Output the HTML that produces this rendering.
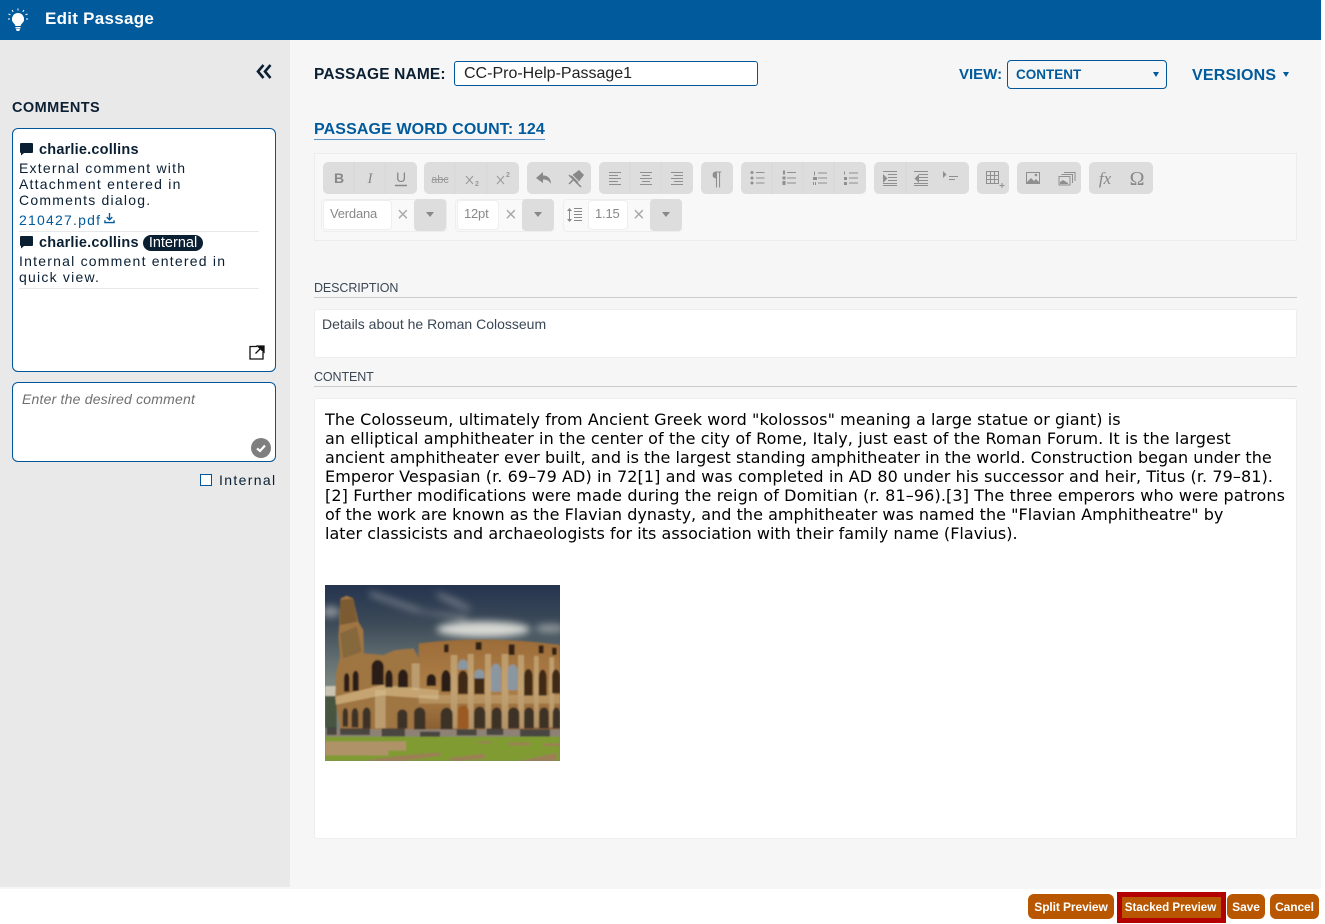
<!DOCTYPE html>
<html><head><meta charset="utf-8"><title>Edit Passage</title>
<style>
html,body{margin:0;padding:0;background:#fff;width:1325px;height:924px;overflow:hidden}
body{position:relative;font-family:"Liberation Sans",sans-serif}
.a{position:absolute}
.t{position:absolute;white-space:nowrap}
.c{font-size:14px;letter-spacing:1.22px;color:#0b1f33;line-height:16px}
.n{font-size:14.5px;font-weight:bold;color:#0b1f33;line-height:16px;letter-spacing:.2px}
.l{font-family:"DejaVu Sans",sans-serif;font-size:16px;color:#000;line-height:19px;left:325px}
.g{position:absolute;top:162px;height:32px;background:#ddd;border-radius:5px}
.g svg{position:absolute;left:0;top:0}
.f{position:absolute;top:199px;height:31px;border:1px solid #eee;border-radius:4px;background:#f9f9f9}
.in{position:absolute;top:200px;height:30px;background:#fff;border:1px solid #eee;border-radius:4px;box-sizing:border-box;color:#888;font-size:13px;line-height:25px;padding-left:6px;letter-spacing:-.2px}
.ar{position:absolute;top:199px;height:32px;width:32px;background:#ddd;border-radius:4px}
.ar:after{content:"";position:absolute;left:12px;top:13px;border-left:4px solid transparent;border-right:4px solid transparent;border-top:5px solid #888}
.x{position:absolute;top:204px;color:#aaa;font-size:20px;line-height:22px}
.b{position:absolute;top:894px;height:25px;background:#b85700;border-radius:6px;color:#fff;font-weight:bold;font-size:12px;line-height:26px;text-align:center;white-space:nowrap;letter-spacing:-.1px}
.h{font-size:12.5px;color:#3a4754;letter-spacing:-.1px}
</style></head><body>
<div class="a" style="left:0;top:0;width:1321px;height:889px;background:#f6f6f6"></div>
<div class="a" style="left:0;top:0;width:1321px;height:40px;background:#005a9c"></div>
<svg class="a" style="left:6px;top:7px" width="24" height="26" viewBox="0 0 24 26"><g stroke="#fff" stroke-width="1" fill="none"><path d="M12 1.500v2M6 3l1.200 1.800M18 3l-1.200 1.800M2.500 7l2 .8M21.500 7l-2 .8M2 12h2M20 12h2"/></g><path d="M12 6a6 6 0 0 0-4 10.500c1 1 1.300 2 1.400 2.500h5.200c.1-.5.400-1.500 1.400-2.500A6 6 0 0 0 12 6z" fill="#fff"/><path d="M9.500 20h5v1.500h-5zM10 22h4l-.7 2h-2.600z" fill="#fff"/></svg>
<div class="t" style="left:45px;top:9px;font-size:17px;font-weight:bold;color:#fff;line-height:20px;letter-spacing:.27px">Edit Passage</div>

<div class="a" style="left:0;top:40px;width:290px;height:847px;background:#e9e9e9"></div>
<svg class="a" style="left:255px;top:63px" width="18" height="17" viewBox="0 0 18 17"><path d="M8.500 2L3 8.500 8.500 15M15.500 2L10 8.500 15.500 15" fill="none" stroke="#0b1f33" stroke-width="2.600"/></svg>
<div class="t" style="left:12px;top:100px;font-size:14.5px;font-weight:bold;color:#0b1f33;line-height:17px;letter-spacing:.45px">COMMENTS</div>

<div class="a" style="left:12px;top:128px;width:262px;height:242px;background:#fff;border:1px solid #00569a;border-radius:6px"></div>
<svg class="a" style="left:20px;top:143px" width="14" height="14" viewBox="0 0 14 14"><path d="M1 0h11a1 1 0 0 1 1 1v8a1 1 0 0 1-1 1H4l-3 2.500V10a1 1 0 0 1-1-1V1a1 1 0 0 1 1-1z" fill="#0b1f33"/></svg>
<div class="t n" style="left:39px;top:142px">charlie.collins</div>
<div class="t c" style="left:19px;top:160px">External comment with</div>
<div class="t c" style="left:19px;top:176px">Attachment entered in</div>
<div class="t c" style="left:19px;top:192px">Comments dialog.</div>
<div class="t c" style="left:19px;top:212px;color:#005a9c">210427.pdf</div>
<svg class="a" style="left:104px;top:212px" width="11" height="12" viewBox="0 0 12 13"><path d="M6 1v7M3 5.500L6 8.500l3-3M1 9v2.500h10V9" fill="none" stroke="#005a9c" stroke-width="1.500"/></svg>
<div class="a" style="left:19px;top:231px;width:240px;height:1px;background:#e8e8e8"></div>
<svg class="a" style="left:20px;top:236px" width="14" height="14" viewBox="0 0 14 14"><path d="M1 0h11a1 1 0 0 1 1 1v8a1 1 0 0 1-1 1H4l-3 2.500V10a1 1 0 0 1-1-1V1a1 1 0 0 1 1-1z" fill="#0b1f33"/></svg>
<div class="t n" style="left:39px;top:235px">charlie.collins</div>
<div class="t" style="left:143px;top:235px;width:60px;height:16px;background:#0b1f33;border-radius:8px;color:#fff;font-size:14.5px;line-height:16px;text-align:center">Internal</div>
<div class="t c" style="left:19px;top:253px">Internal comment entered in</div>
<div class="t c" style="left:19px;top:269px">quick view.</div>
<div class="a" style="left:19px;top:288px;width:240px;height:1px;background:#e8e8e8"></div>
<svg class="a" style="left:249px;top:345px" width="16" height="15" viewBox="0 0 16 15"><path d="M8 1.500H1v12.500h13V7" fill="none" stroke="#111" stroke-width="1.300"/><path d="M6.500 8.500L12 3M8.500 1h6.500v6z" fill="#111" stroke="#111" stroke-width="1.300"/></svg>

<div class="a" style="left:12px;top:382px;width:262px;height:78px;background:#fff;border:1px solid #00569a;border-radius:6px"></div>
<div class="t" style="left:22px;top:391px;font-size:14px;font-style:italic;color:#6f6f6f;line-height:16px;letter-spacing:.2px">Enter the desired comment</div>
<div class="a" style="left:251px;top:438px;width:20px;height:20px;border-radius:50%;background:#7f7f7f"></div>
<svg class="a" style="left:251px;top:438px" width="20" height="20" viewBox="0 0 20 20"><path d="M6 10.500l3 2.500 5-5.500" fill="none" stroke="#fff" stroke-width="2.200"/></svg>
<div class="a" style="left:200px;top:474px;width:10px;height:10px;border:1px solid #00569a;background:#fff"></div>
<div class="t c" style="left:219px;top:472px;letter-spacing:1.35px">Internal</div>

<div class="t" style="left:314px;top:65px;font-size:15.5px;font-weight:bold;color:#0b1f33;line-height:19px;letter-spacing:.15px">PASSAGE NAME:</div>
<div class="a" style="left:454px;top:61px;width:302px;height:23px;background:#fff;border:1px solid #00569a;border-radius:3px"></div>
<div class="t" style="left:464px;top:65px;font-size:16px;color:#222;line-height:18px">CC-Pro-Help-Passage1</div>
<div class="t" style="left:959px;top:65px;font-size:15px;font-weight:bold;color:#005a9c;line-height:19px">VIEW:</div>
<div class="a" style="left:1007px;top:60px;width:158px;height:27px;border:1px solid #00569a;border-radius:4px;background:#f6f6f6"></div>
<div class="t" style="left:1016px;top:66px;font-size:13.500px;font-weight:bold;color:#005a9c;line-height:18px">CONTENT</div>
<div class="a" style="left:1153px;top:72px;border-left:3.500px solid transparent;border-right:3.500px solid transparent;border-top:5px solid #005a9c"></div>
<div class="t" style="left:1192px;top:66px;font-size:16px;font-weight:bold;color:#005a9c;line-height:19px;letter-spacing:.2px">VERSIONS</div>
<div class="a" style="left:1283px;top:72px;border-left:3.500px solid transparent;border-right:3.500px solid transparent;border-top:5px solid #005a9c"></div>
<div class="t" style="left:314px;top:120px;font-size:16px;font-weight:bold;color:#005a9c;line-height:19px;letter-spacing:.12px;border-bottom:1px solid #5b93c2;height:19px">PASSAGE WORD COUNT: 124</div>

<div class="a" style="left:314px;top:153px;width:981px;height:86px;border:1px solid #ececec;background:#f8f8f8"></div>
<div class="g" style="left:323px;width:94px"><svg width="94" height="32" viewBox="0 0 94 32"><path d="M31 0v32M62 0v32" stroke="#d8d8d8"/><text x="16" y="21" font-family="Liberation Sans" font-weight="bold" font-size="14" fill="#888" text-anchor="middle">B</text><text x="47" y="21" font-family="Liberation Serif" font-style="italic" font-size="15" fill="#888" text-anchor="middle">I</text><text x="78" y="20" font-family="Liberation Sans" font-size="14" fill="#888" text-anchor="middle">U</text><path d="M72 23.500h12" stroke="#888" stroke-width="1.500"/></svg></div>
<div class="g" style="left:424px;width:95px"><svg width="95" height="32" viewBox="0 0 95 32"><path d="M31 0v32M63 0v32" stroke="#d8d8d8"/><text x="16" y="21" font-family="Liberation Sans" font-size="11" fill="#999" text-anchor="middle">abc</text><path d="M8 17.500h16" stroke="#999"/><path d="M42 14l7 8M49 14l-7 8M73 14l7 8M80 14l-7 8" stroke="#999" fill="none"/><text x="53" y="24" font-family="Liberation Sans" font-size="7" font-weight="bold" fill="#999" text-anchor="middle">2</text><text x="84" y="15" font-family="Liberation Sans" font-size="7" font-weight="bold" fill="#999" text-anchor="middle">2</text></svg></div>
<div class="g" style="left:527px;width:64px"><svg width="64" height="32" viewBox="0 0 64 32"><path d="M9 16l7-6v3.500c5 0 8 3 8 8.500-2-3.500-4-4.500-8-4.500V21z" fill="#888"/><path d="M44 14l8-6 5 5-7 9z" fill="#888"/><path d="M42 13l12 12" stroke="#888" stroke-width="1.500"/><path d="M42 22l4-4" stroke="#888" stroke-width="1.500"/><path d="M41 9l15 15" stroke="#ddd" stroke-width="1"/></svg></div>
<div class="g" style="left:599px;width:94px"><svg width="94" height="32" viewBox="0 0 94 32"><path d="M31 0v32M62 0v32" stroke="#d8d8d8"/><path d="M10 10.500h12M10 13.500h9M10 16.500h12M10 19.500h9M10 22.500h12M41 10.500h12M43 13.500h8M41 16.500h12M43 19.500h8M41 22.500h12M72 10.500h12M75 13.500h9M72 16.500h12M75 19.500h9M72 22.500h12" stroke="#8f8f8f"/></svg></div>
<div class="g" style="left:701px;width:32px"><svg width="32" height="32" viewBox="0 0 32 32"><text x="16" y="23" font-family="Liberation Sans" font-size="19" fill="#8f8f8f" text-anchor="middle">¶</text></svg></div>
<div class="g" style="left:741px;width:125px"><svg width="125" height="32" viewBox="0 0 125 32"><path d="M31 0v32M62 0v32M93 0v32" stroke="#d8d8d8"/><circle cx="11" cy="10.500" r="1.500" fill="#8f8f8f"/><circle cx="11" cy="16" r="1.500" fill="#8f8f8f"/><circle cx="11" cy="21" r="1.500" fill="#8f8f8f"/><path d="M15 10.500h8.500M15 16h8.500M15 21h8.500M46 10.500h9M46 16h9M46 21h9M77 11h9M77 16h9M77 21h9M108 11h9M108 16h9M108 21h9" stroke="#8f8f8f"/><path d="M42 8.500h2v4h-2zM41.500 14.500h3v3h-3zM41.500 19h3v4h-3zM73 9.500h1v4h-1zM72 15h4v3h-4zM72 20h1v3h-1zM74 20h1v3h-1zM103 9.500h1v3h-1zM103 15h3v3h-3zM103 20h3v3h-3z" fill="#8f8f8f"/></svg></div>
<div class="g" style="left:874px;width:95px"><svg width="95" height="32" viewBox="0 0 95 32"><path d="M32 0v32" stroke="#d8d8d8"/><path d="M9 9.500h14M14 12.500h9M14 15.500h9M14 18.500h9M9 21.500h14M9 23.500h14M40 9.500h14M45 12.500h9M45 15.500h9M45 18.500h9M40 21.500h14M40 23.500h14M75 14.500h9M75 17.500h6" stroke="#8f8f8f"/><path d="M9 12v9l4.500-4.500zM45 12v9l-4.500-4.500zM69 9v7l3.500-3.500z" fill="#8f8f8f"/></svg></div>
<div class="g" style="left:977px;width:32px"><svg width="32" height="32" viewBox="0 0 32 32"><path d="M9.500 9.500h12v12h-12zM13.500 9.500v12M17.500 9.500v12M9.500 13.500h12M9.500 17.500h12M25 21v5M22.500 23.500h5" fill="none" stroke="#8f8f8f"/></svg></div>
<div class="g" style="left:1017px;width:64px"><svg width="64" height="32" viewBox="0 0 64 32"><path d="M9 10h14v12H9z" fill="#8f8f8f"/><path d="M10 20l4-4 3 3 2-2 3 3v-9H10z" fill="#ddd"/><circle cx="19" cy="13" r="1.300" fill="#8f8f8f"/><path d="M42 14.500h11V23H42zM44.500 12.500h11V21M47 10.500h11V19" fill="none" stroke="#8f8f8f"/><path d="M43 20l3-2 5 3v1h-8z" fill="#8f8f8f"/></svg></div>
<div class="g" style="left:1089px;width:64px"><svg width="64" height="32" viewBox="0 0 64 32"><text x="16" y="22" font-family="Liberation Serif" font-style="italic" font-size="17" fill="#888" text-anchor="middle">fx</text><text x="48" y="23" font-family="Liberation Serif" font-size="20" fill="#888" text-anchor="middle">Ω</text></svg></div>

<div class="f" style="left:321px;width:124px"></div>
<div class="in" style="left:323px;width:69px">Verdana</div>
<div class="x" style="left:397px">×</div>
<div class="ar" style="left:414px"></div>
<div class="f" style="left:455px;width:97px"></div>
<div class="in" style="left:457px;width:42px">12pt</div>
<div class="x" style="left:505px">×</div>
<div class="ar" style="left:522px"></div>
<div class="f" style="left:563px;width:117px"></div>
<svg class="a" style="left:566px;top:206px" width="18" height="18" viewBox="0 0 18 18"><path d="M3.500 3v12" stroke="#888"/><path d="M1 5l2.500-3L6 5zM1 13l2.500 3L6 13z" fill="#888"/><path d="M8 2.500h8M8 5.500h8M8 8.500h8M8 11.500h8M8 14.500h8" stroke="#888"/></svg>
<div class="in" style="left:588px;width:40px">1.15</div>
<div class="x" style="left:633px">×</div>
<div class="ar" style="left:650px"></div>

<div class="t h" style="left:314px;top:281px;line-height:15px">DESCRIPTION</div>
<div class="a" style="left:314px;top:297px;width:983px;height:1px;background:#ccc"></div>
<div class="a" style="left:314px;top:309px;width:981px;height:47px;background:#fff;border:1px solid #eee;border-radius:3px"></div>
<div class="t" style="left:322px;top:316px;font-size:14px;color:#3a4754;line-height:16px">Details about he Roman Colosseum</div>
<div class="t h" style="left:314px;top:370px;line-height:15px">CONTENT</div>
<div class="a" style="left:314px;top:386px;width:983px;height:1px;background:#ccc"></div>
<div class="a" style="left:314px;top:398px;width:981px;height:439px;background:#fff;border:1px solid #eee;border-radius:3px"></div>

<div class="t l" style="top:410px;letter-spacing:.074px">The Colosseum, ultimately from Ancient Greek word "kolossos" meaning a large statue or giant) is</div>
<div class="t l" style="top:429px;letter-spacing:.106px">an elliptical amphitheater in the center of the city of Rome, Italy, just east of the Roman Forum. It is the largest</div>
<div class="t l" style="top:448px;letter-spacing:.026px">ancient amphitheater ever built, and is the largest standing amphitheater in the world. Construction began under the</div>
<div class="t l" style="top:467px;letter-spacing:.095px">Emperor Vespasian (r. 69–79 AD) in 72[1] and was completed in AD 80 under his successor and heir, Titus (r. 79–81).</div>
<div class="t l" style="top:486px;letter-spacing:.12px">[2] Further modifications were made during the reign of Domitian (r. 81–96).[3] The three emperors who were patrons</div>
<div class="t l" style="top:505px;letter-spacing:.03px">of the work are known as the Flavian dynasty, and the amphitheater was named the "Flavian Amphitheatre" by</div>
<div class="t l" style="top:524px;letter-spacing:.03px">later classicists and archaeologists for its association with their family name (Flavius).</div>

<svg class="a" style="left:325px;top:585px" width="235" height="176" viewBox="15 15 705 528">
<defs>
<linearGradient id="s" x1="0" y1="0" x2="0" y2="1"><stop offset="0" stop-color="#25344f"/><stop offset=".22" stop-color="#3c4a58"/><stop offset=".55" stop-color="#79847f"/></linearGradient>
<linearGradient id="w" x1="0" y1="0" x2="0" y2="1"><stop offset="0" stop-color="#9c6c38"/><stop offset=".55" stop-color="#ad7f48"/><stop offset="1" stop-color="#8a5f32"/></linearGradient>
<filter id="bl"><feGaussianBlur stdDeviation="2"/></filter><filter id="bc"><feGaussianBlur stdDeviation="11"/></filter>
</defs>
<rect x="15" y="15" width="705" height="528" fill="url(#s)"/>
<g filter="url(#bc)" fill="#dfe0da"><ellipse cx="490" cy="148" rx="140" ry="24" opacity=".95"/><path d="M150 35l170 60 120 15 0 12-160-30-130-45z" opacity=".5"/><ellipse cx="690" cy="145" rx="45" ry="13" opacity=".5"/><ellipse cx="32" cy="95" rx="28" ry="16" opacity=".5"/><ellipse cx="400" cy="65" rx="60" ry="10" opacity=".35" transform="rotate(25 400 65)"/></g>
<g filter="url(#bl)">
<path d="M15 318h35v30H15z" fill="#c9c3b0"/><path d="M15 348h35v95H15z" fill="#46553f"/>
<path d="M296 190Q500 165 720 195V450H296z" fill="url(#w)"/>
<path d="M58 100L62 55 80 47 100 55 115 125 130 150 132 220 190 225 225 210 280 205 300 240 300 450 60 450 46 350 48 280 60 230 55 170 58 130z" fill="#9f7442"/>
<path d="M60 60l40-5 12 70-52 10z" fill="#7b5a32"/>
<path d="M60 160l50-20 15 75-55 20z" fill="#86683c"/>
<path d="M46 350l140-35 170 15v28l-170-12-138 28z" fill="#c5a471"/>
<g fill="#d8c49a" opacity=".5"><path d="M392 225h20v220h-20zM443 222h18v225h-18zM495 222h18v225h-18zM545 222h20v225h-20zM594 225h18v220h-18zM642 228h14v215h-14zM688 232h14v210h-14zM165 330h32v115h-32zM275 250h24v80h-24z"/><path d="M296 345h424v26H296z" opacity=".7"/></g>
<g>
<path d="M414 342v-48a15 22 0 0 1 30 0v48zM463 342v-48a15 22 0 0 1 30 0v48zM612 347v-58a13 22 0 0 1 26 0v58zM656 347v-56a12 22 0 0 1 24 0v56zM696 340v-50a11 20 0 0 1 24 0v50z" fill="#3f2a16"/>
<path d="M364 335v-40a14 25 0 0 1 28 0v40zM320 318v-20a14 16 0 0 1 28 0v20zM234 322v-32a15 22 0 0 1 30 0v32zM196 322v-30a11 22 0 0 1 22 0v30zM155 315v-55a18 20 0 0 1 36 0v55zM98 333v-45a9 16 0 0 1 18 0v45zM72 335v-40a8 16 0 0 1 16 0v40z" fill="#2a1e12"/>
<path d="M362 448v-45a18 20 0 0 1 36 0v45zM462 445v-45a17 20 0 0 1 34 0v45zM515 445v-45a15 18 0 0 1 30 0v45zM564 445v-45a17 18 0 0 1 34 0v45zM612 445v-45a15 18 0 0 1 30 0v45zM658 445v-45a14 18 0 0 1 28 0v45zM698 445v-45a11 18 0 0 1 22 0v45zM282 450v-50a17 18 0 0 1 34 0v50zM232 445v-45a16 18 0 0 1 30 0v45zM128 445v-45a12 18 0 0 1 24 0v45zM95 442v-40a10 18 0 0 1 20 0v40zM68 440v-40a8 16 0 0 1 16 0v40z" fill="#3d3126"/>
<path d="M414 445v-50a16 18 0 0 1 32 0v50z" fill="#9b5a22"/>
<path d="M414 268v-12a15 18 0 0 1 30 0v12zM513 335v-62a15 22 0 0 1 30 0v62zM563 330v-55a15 22 0 0 1 30 0v55z" fill="#8a97a0"/><path d="M463 295v-12a15 15 0 0 1 30 0v12z" fill="#8a97a0"/>
<path d="M372 193h14v24h-14zM467 186h18v24h-18zM566 193h18v32h-18zM656 196h15v24h-15zM696 203h14v22h-14z" fill="#332415"/></g>
<path d="M15 448h705v22H15z" fill="#8d8274"/>
<g fill="#2d2a2b" opacity=".7"><path d="M20 442h30v23H20zM60 445h90v20H60zM185 445h70v24h-70zM300 455h60v18h-60zM410 448h60v18h-60zM500 445h50v20h-50zM600 448h90v22h-90z"/></g>
<path d="M15 470h705v73H15z" fill="#7f9b33"/>
<path d="M15 484h243v28H15zM15 512h190v14H15z" fill="#b09268"/>
<path d="M130 543q120-20 230-25l5 8-120 17zM380 535l115-14v14l-90 8zM600 543l110-25v25zM475 484h40v6h-40zM560 488h70v8h-60zM670 490h50v8h-50z" fill="#9c7f55"/>
</g>
</svg>

<div class="a" style="left:0;top:889px;width:1325px;height:35px;background:#fff"></div>
<div class="b" style="left:1028px;width:86px">Split Preview</div>
<div class="a" style="left:1117px;top:892px;width:99px;height:21px;background:#b85700;border:5px solid #b30000"></div>
<div class="t" style="left:1116px;top:895px;width:109px;text-align:center;color:#fff;font-weight:bold;font-size:11.600px;line-height:26px">Stacked Preview</div>
<div class="b" style="left:1227px;width:38px">Save</div>
<div class="b" style="left:1270px;width:49px">Cancel</div>
</body></html>
